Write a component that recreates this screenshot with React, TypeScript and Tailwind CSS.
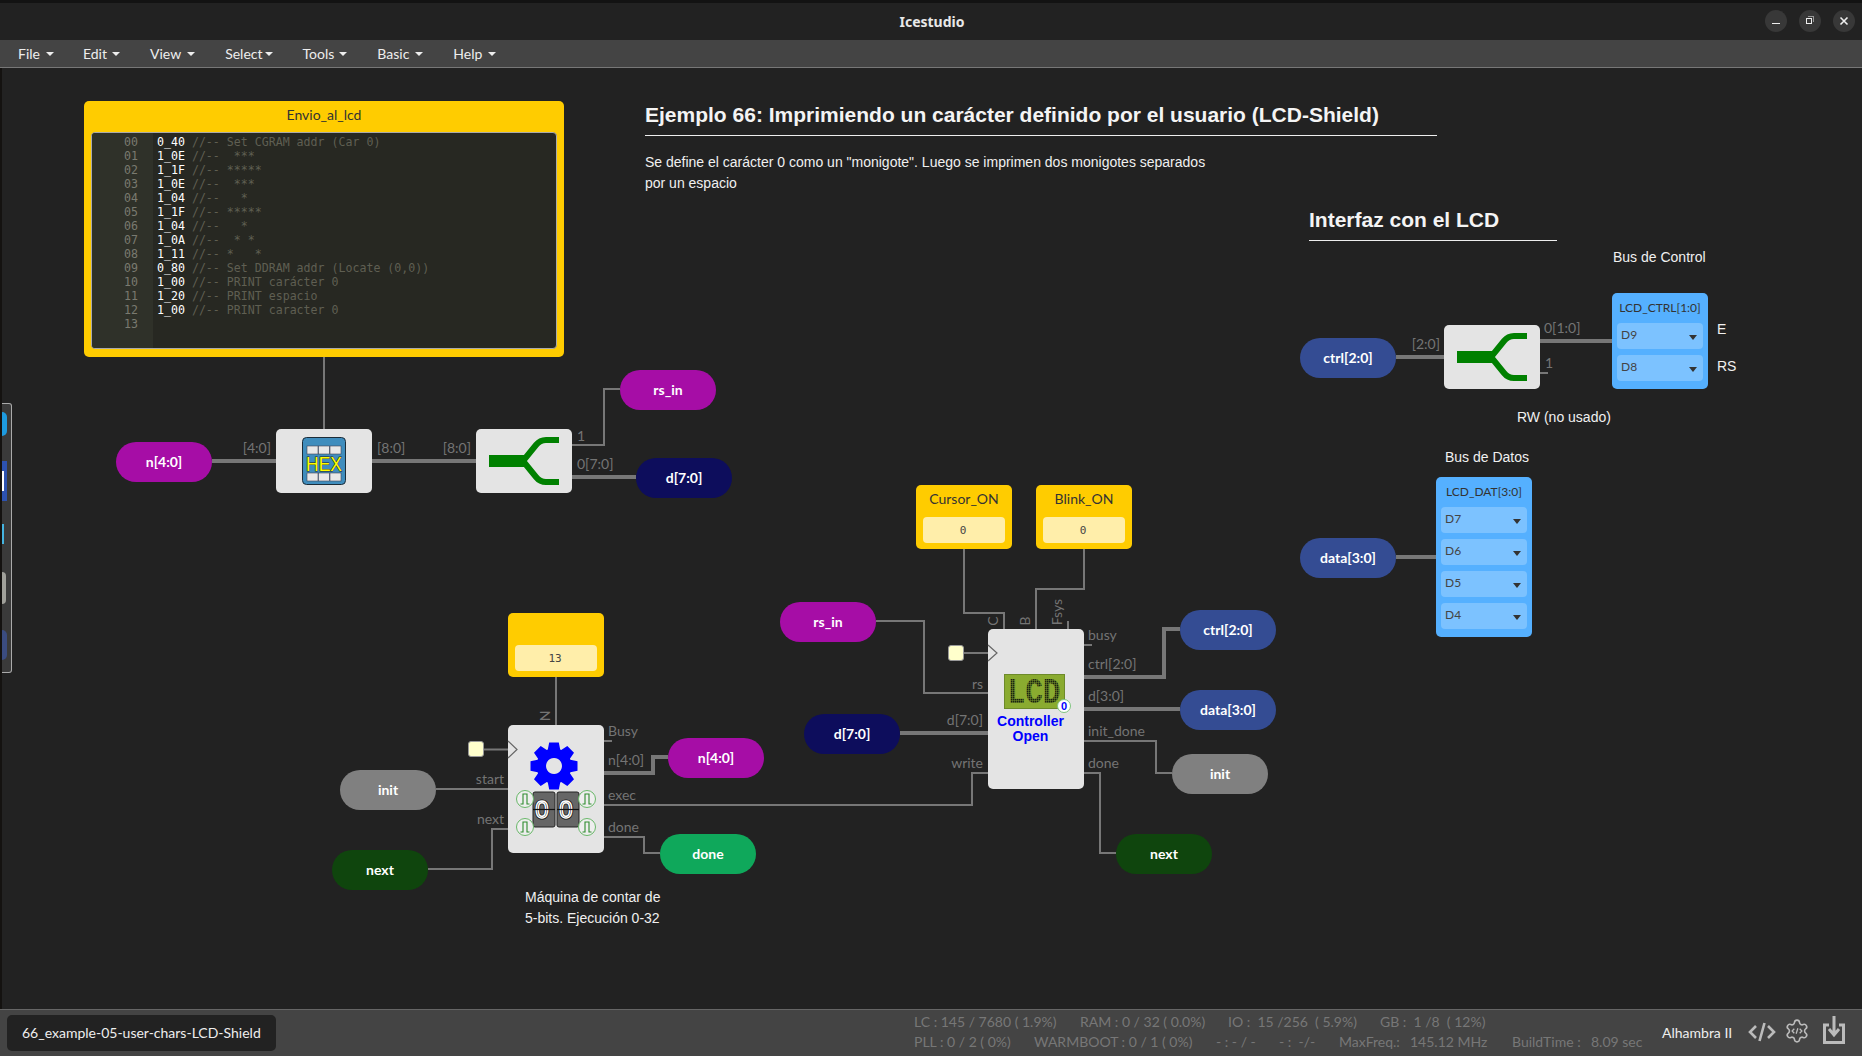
import React from 'react';

const menus = [
  { label: 'File', caret: 'ml-[6px]', gap: 'mr-[29px]' },
  { label: 'Edit', caret: 'ml-[5px]', gap: 'mr-[30px]' },
  { label: 'View', caret: 'ml-[6px]', gap: 'mr-[30px]' },
  { label: 'Select', caret: 'ml-[2px]', gap: 'mr-[30px]' },
  { label: 'Tools', caret: 'ml-[5px]', gap: 'mr-[30px]' },
  { label: 'Basic', caret: 'ml-[6px]', gap: 'mr-[30px]' },
  { label: 'Help', caret: 'ml-[6px]', gap: 'mr-[30px]' },
];

const codeLines = [
  ['0_40', '//-- Set CGRAM addr (Car 0)'],
  ['1_0E', '//--  ***'],
  ['1_1F', '//-- *****'],
  ['1_0E', '//--  ***'],
  ['1_04', '//--   *'],
  ['1_1F', '//-- *****'],
  ['1_04', '//--   *'],
  ['1_0A', '//--  * *'],
  ['1_11', '//-- *   *'],
  ['0_80', '//-- Set DDRAM addr (Locate (0,0))'],
  ['1_00', '//-- PRINT carácter 0'],
  ['1_20', '//-- PRINT espacio'],
  ['1_00', '//-- PRINT caracter 0'],
  ['', ''],
];

// wires in page coordinates
const thinWires = [
  'M324 357V429',
  'M620 389H604V445H572',
  'M556 677V725',
  'M484 749.5H508',
  'M436 789H508',
  'M428 869H492V829H508',
  'M604 741H612',
  'M604 805H972V773H988',
  'M604 837H644V853H660',
  'M964 549V613H1004V629',
  'M1084 549V589H1036V629',
  'M1068 621V629',
  'M876 621H924V693H988',
  'M964 653H988',
  'M1084 645H1092',
  'M1084 741H1156V773H1172',
  'M1084 773H1100V853H1116',
  'M1540 373H1548',
];

const thickWires = [
  'M212 461H276',
  'M372 461H476',
  'M572 477H636',
  'M604 773H653V757H668',
  'M900 733H988',
  'M1084 677H1164V629H1180',
  'M1084 709H1180',
  'M1396 357H1444',
  'M1540 341H1612',
  'M1396 557H1436',
];

function gearPath(cx: number, cy: number) {
  const teeth = 8;
  let d = '';
  for (let i = 0; i < teeth; i++) {
    const a = (i * 2 * Math.PI) / teeth - Math.PI / 2;
    const pts: [number, number][] = [
      [17.5, -0.36],
      [24, -0.2],
      [24, 0.2],
      [17.5, 0.36],
    ];
    pts.forEach(([r, da]) => {
      const x = cx + r * Math.cos(a + da);
      const y = cy + r * Math.sin(a + da);
      d += `${d ? 'L' : 'M'}${x.toFixed(1)} ${y.toFixed(1)}`;
    });
  }
  return `${d}Z`;
}

function Pill({ label, className }: { label: string; className: string }) {
  return (
    <div className={`absolute flex h-10 w-24 items-center justify-center rounded-[20px] pb-[2px] text-[14px] font-bold text-white ${className}`}>
      {label}
    </div>
  );
}

function Port({ children, className }: { children: React.ReactNode; className: string }) {
  return <div className={`absolute whitespace-nowrap text-[14px] leading-5 text-[#747474] ${className}`}>{children}</div>;
}

function Note({ children, className }: { children: React.ReactNode; className: string }) {
  return (
    <div className={`absolute whitespace-nowrap font-['Liberation_Sans',Arial,sans-serif] text-[14px] leading-5 text-[#f0f0f0] ${className}`}>
      {children}
    </div>
  );
}

function Constant({ name, value, className }: { name: string; value: string; className: string }) {
  return (
    <div className={`absolute flex h-16 w-24 flex-col items-center rounded-[5px] bg-[#ffcc00] ${className}`}>
      <div className="mb-1 flex h-7 items-center pb-[2px] text-[14px] text-[#333]">{name}</div>
      <div className="flex h-[26px] w-[82px] items-center justify-center rounded-[4px] bg-[#ffeeaa] pr-[2px] pt-[2px] font-['DejaVu_Sans_Mono',monospace] text-[11px] text-[#444]">
        {value}
      </div>
    </div>
  );
}

function PinSelect({ name }: { name: string }) {
  return (
    <div className="flex h-[26px] w-[86px] items-center justify-between rounded-[4px] bg-[#7cc2ff] pb-[2px] pl-[4px] pr-[6px] text-[12px] text-[#444]">
      <span>{name}</span>
      <span className="mt-[5px] h-0 w-0 border-x-4 border-t-[5px] border-x-transparent border-t-[#333]" />
    </div>
  );
}

function Clock({ className }: { className: string }) {
  return <div className={`absolute h-4 w-4 rounded-[3px] border border-[#999] bg-[#ffffcc] ${className}`} />;
}

function SplitIcon() {
  return (
    <svg width="96" height="64" viewBox="0 0 96 64" fill="none" stroke="#008000">
      <path d="M13 32H50" strokeWidth="12" />
      <path d="M47 32L60 16Q64 11 70 11H83" strokeWidth="6" />
      <path d="M47 32L60 48Q64 53 70 53H83" strokeWidth="6" />
    </svg>
  );
}

function Splitter({ className }: { className: string }) {
  return (
    <div className={`absolute h-16 w-24 rounded-[5px] bg-[#e4e4e4] ${className}`}>
      <SplitIcon />
    </div>
  );
}

function HexIcon() {
  const cols = [5, 16.5, 28];
  return (
    <svg width="44" height="48" viewBox="0 0 44 48">
      <rect x="0.5" y="0.5" width="43" height="47" rx="4" fill="#3f8dbd" stroke="#1c2c38" />
      {cols.map((x) => (
        <rect key={`t${x}`} x={x} y="9" width="11" height="8" fill="#e8e8e8" stroke="#445" strokeWidth="0.6" />
      ))}
      {cols.map((x) => (
        <rect key={`b${x}`} x={x} y="36" width="11" height="8" fill="#e8e8e8" stroke="#445" strokeWidth="0.6" />
      ))}
      <text
        x="22"
        y="34"
        textAnchor="middle"
        textLength="36"
        lengthAdjust="spacingAndGlyphs"
        fontFamily="Liberation Sans, sans-serif"
        fontSize="20"
        fill="#ffff00"
        stroke="#222"
        strokeWidth="1"
        paintOrder="stroke"
      >
        HEX
      </text>
    </svg>
  );
}

function Pulse({ x, y }: { x: number; y: number }) {
  return (
    <g transform={`translate(${x} ${y})`} fill="none">
      <circle r="8.5" fill="#eee" stroke="#69b869" />
      <path d="M-4.5 5H-2V-5H2V5H4.5" stroke="#2e8b2e" strokeWidth="1.1" />
    </g>
  );
}

function CounterIcon() {
  return (
    <svg className="absolute inset-0" width="96" height="128" viewBox="508 725 96 128">
      <path d={`${gearPath(554, 766)}M554 758a8 8 0 1 0 0.01 0Z`} fill="#0000ff" fillRule="evenodd" />
      {[533, 557].map((x) => (
        <g key={x} fontFamily="Liberation Sans, sans-serif" fontSize="24" textAnchor="middle" fill="none">
          <rect x={x} y="792" width="22" height="35" rx="2" fill="#666" stroke="#222" />
          <text x={x + 9} y="818" stroke="#111" strokeWidth="3">
            0
          </text>
          <text x={x + 9} y="818" stroke="#fff" strokeWidth="1.4">
            0
          </text>
          <path d={`M${x} 809.5H${x + 22}`} stroke="#111" strokeWidth="1.2" />
        </g>
      ))}
      <Pulse x={525} y={799} />
      <Pulse x={587} y={799} />
      <Pulse x={525} y={827} />
      <Pulse x={587} y={827} />
    </svg>
  );
}

function LcdIcon() {
  return (
    <svg className="absolute left-4 top-[45px]" width="67" height="42" viewBox="0 0 67 42">
      <defs>
        <pattern id="dots" width="2" height="2" patternUnits="userSpaceOnUse">
          <path d="M0 0H2M0 0V2" stroke="#8aab30" strokeWidth="0.8" />
        </pattern>
      </defs>
      <rect x="0.5" y="0.5" width="60" height="34" fill="#8aab30" stroke="#6d8a2a" />
      <text
        x="30"
        y="29"
        textAnchor="middle"
        textLength="53"
        lengthAdjust="spacingAndGlyphs"
        fontFamily="Liberation Mono, monospace"
        fontWeight="bold"
        fontSize="37"
        fill="#1a2410"
      >
        LCD
      </text>
      <rect x="1" y="1" width="59" height="33" fill="url(#dots)" />
      <circle cx="60" cy="32" r="6.5" fill="#fff" stroke="#7fc47f" />
      <text
        x="60"
        y="36"
        textAnchor="middle"
        fontFamily="Liberation Sans, sans-serif"
        fontWeight="bold"
        fontSize="11"
        fill="#0000ff"
      >
        0
      </text>
    </svg>
  );
}

function SideDock() {
  return (
    <div className="absolute left-[2px] top-[335px] h-[270px] w-[10px] rounded-r-[3px] border-y border-r border-[#aaa] bg-[#3a3a3a]">
      <div className="absolute left-0 top-[8px] h-[24px] w-[5px] rounded-r-md bg-[#1e9be0]" />
      <div className="absolute left-0 top-[57px] h-[40px] w-[5px] bg-[#2d52b0]">
        <div className="h-[20px] w-[2px] translate-y-[10px] bg-white" />
      </div>
      <div className="absolute left-0 top-[120px] h-[20px] w-[2px] bg-[#45b4e0]" />
      <div className="absolute left-0 top-[168px] h-[32px] w-[4px] rounded-r-sm bg-[#a0a09a]" />
      <div className="absolute left-0 top-[226px] h-[30px] w-[5px] rounded-r-full bg-[#3b4c80]" />
    </div>
  );
}

export default function App() {
  return (
    <div className="flex h-screen w-full flex-col overflow-hidden bg-[#222] font-[Lato,sans-serif]">
      {/* title bar */}
      <div className="relative flex h-10 shrink-0 items-center justify-center border-t-[3px] border-[#131313] bg-[#222]">
        <span className="pl-[2px] font-['Noto_Sans',sans-serif] text-[14px] font-bold text-[#e8e8e8]">Icestudio</span>
        <div className="absolute right-[7px] top-[7px] flex gap-[12px]">
          <button className="flex h-[22px] w-[22px] items-center justify-center rounded-full bg-[#383838]">
            <span className="mt-[5px] h-[1px] w-[8px] bg-[#eee]" />
          </button>
          <button className="relative flex h-[22px] w-[22px] items-center justify-center rounded-full bg-[#383838]">
            <span className="absolute left-[9px] top-[6px] h-[6px] w-[6px] border-r border-t border-[#999]" />
            <span className="absolute left-[7px] top-[8px] h-[6px] w-[6px] border border-[#eee]" />
          </button>
          <button className="flex h-[22px] w-[22px] items-center justify-center rounded-full bg-[#383838]">
            <svg width="10" height="10" viewBox="0 0 10 10" stroke="#eee" strokeWidth="1.6">
              <path d="M1.5 1.5L8.5 8.5M8.5 1.5L1.5 8.5" />
            </svg>
          </button>
        </div>
      </div>

      {/* menu bar */}
      <div className="flex h-7 shrink-0 items-center border-b border-[#777] bg-[#444] pl-[18px] text-[14px] text-[#eee]">
        {menus.map((m) => (
          <div key={m.label} className={`flex items-center ${m.gap}`}>
            <span>{m.label}</span>
            <span className={`h-0 w-0 border-x-4 border-t-4 border-x-transparent border-t-[#eee] ${m.caret}`} />
          </div>
        ))}
      </div>

      {/* canvas */}
      <div className="relative flex-1 border-l-2 border-[#141210]">
        <div className="absolute -left-[2px] top-0 h-[941px] w-[1862px]">
          <svg className="absolute inset-0" width="1862" height="941" viewBox="0 68 1862 941" fill="none" stroke="#777">
            {thinWires.map((d) => (
              <path key={d} d={d} strokeWidth="2" />
            ))}
            {thickWires.map((d) => (
              <path key={d} d={d} strokeWidth="4" />
            ))}
          </svg>

          {/* memory block */}
          <div className="absolute left-[84px] top-[33px] flex h-[256px] w-[480px] flex-col rounded-[5px] bg-[#ffcc00] pb-2 pl-[7px] pr-[7px]">
            <div className="flex h-[31px] items-center justify-center pb-[5px] text-[14px] text-[#333]">Envio_al_lcd</div>
            <div className="flex flex-1 overflow-hidden rounded-[4px] border border-[#aaa] bg-[#272822] font-['DejaVu_Sans_Mono',monospace] text-[11.6px] leading-[14px]">
              <div className="w-[61px] shrink-0 bg-[#2f3129] pr-[15px] pt-[2px] text-right text-[#7a7a70]">
                {codeLines.map((_, i) => (
                  <div key={i}>{String(i).padStart(2, '0')}</div>
                ))}
              </div>
              <div className="pl-[4px] pt-[2px]">
                {codeLines.map(([code, comment], i) => (
                  <div key={i} className="h-[14px] whitespace-pre text-[#ffffff]">
                    {code} <span className="text-[#5f5f52]">{comment}</span>
                  </div>
                ))}
              </div>
            </div>
          </div>

          <Pill label="n[4:0]" className="left-[116px] top-[374px] bg-[#a60da6]" />
          <Pill label="rs_in" className="left-[620px] top-[302px] bg-[#a60da6]" />
          <Pill label="d[7:0]" className="left-[636px] top-[390px] bg-[#0d0d5c]" />
          <div className="absolute left-[276px] top-[361px] flex h-16 w-24 items-center justify-center rounded-[5px] bg-[#e4e4e4]">
            <HexIcon />
          </div>
          <Splitter className="left-[476px] top-[361px]" />
          <Port className="right-[1591px] top-[370px]">[4:0]</Port>
          <Port className="left-[377px] top-[370px]">[8:0]</Port>
          <Port className="right-[1391px] top-[370px]">[8:0]</Port>
          <Port className="left-[577px] top-[358px]">1</Port>
          <Port className="left-[577px] top-[386px]">0[7:0]</Port>

          {/* counter */}
          <Constant name="" value="13" className="left-[508px] top-[545px]" />
          <Clock className="left-[468px] top-[673px]" />
          <div className="absolute left-[508px] top-[657px] h-32 w-24 rounded-[5px] bg-[#e4e4e4]">
            <CounterIcon />
          </div>
          <Pill label="init" className="left-[340px] top-[702px] bg-[#808080]" />
          <Pill label="next" className="left-[332px] top-[782px] bg-[#0f450d]" />
          <Pill label="n[4:0]" className="left-[668px] top-[670px] bg-[#a60da6]" />
          <Pill label="done" className="left-[660px] top-[766px] bg-[#0fa85b]" />
          <Port className="left-[535px] top-[638px] w-5 -rotate-90 text-center">N</Port>
          <Port className="left-[608px] top-[653px]">Busy</Port>
          <Port className="left-[608px] top-[682px]">n[4:0]</Port>
          <Port className="left-[608px] top-[717px]">exec</Port>
          <Port className="left-[608px] top-[749px]">done</Port>
          <Port className="right-[1358px] top-[701px]">start</Port>
          <Port className="right-[1358px] top-[741px]">next</Port>
          <Note className="left-[525px] top-[819px] leading-[21px]">
            Máquina de contar de
            <br />
            5-bits. Ejecución 0-32
          </Note>

          {/* lcd controller */}
          <Constant name="Cursor_ON" value="0" className="left-[916px] top-[417px]" />
          <Constant name="Blink_ON" value="0" className="left-[1036px] top-[417px]" />
          <Clock className="left-[948px] top-[577px]" />
          <div className="absolute left-[988px] top-[561px] h-40 w-24 rounded-[5px] bg-[#e4e4e4]">
            <LcdIcon />
            <div className="absolute left-0 top-[85px] w-[85px] text-center font-['Liberation_Sans',Arial,sans-serif] text-[14px] font-bold leading-[15px] text-[#0000ff]">
              Controller
              <br />
              Open
            </div>
          </div>
          <Pill label="rs_in" className="left-[780px] top-[534px] bg-[#a60da6]" />
          <Pill label="d[7:0]" className="left-[804px] top-[646px] bg-[#0d0d5c]" />
          <Pill label="ctrl[2:0]" className="left-[1180px] top-[542px] bg-[#344c93]" />
          <Pill label="data[3:0]" className="left-[1180px] top-[622px] bg-[#344c93]" />
          <Pill label="init" className="left-[1172px] top-[686px] bg-[#808080]" />
          <Pill label="next" className="left-[1116px] top-[766px] bg-[#0f450d]" />
          <Port className="left-[983px] top-[543px] w-5 -rotate-90 text-center">C</Port>
          <Port className="left-[1015px] top-[543px] w-5 -rotate-90 text-center">B</Port>
          <Port className="left-[1037px] top-[534px] w-10 -rotate-90 text-center">Fsys</Port>
          <Port className="left-[1088px] top-[557px]">busy</Port>
          <Port className="left-[1088px] top-[586px]">ctrl[2:0]</Port>
          <Port className="left-[1088px] top-[618px]">d[3:0]</Port>
          <Port className="left-[1088px] top-[653px]">init_done</Port>
          <Port className="left-[1088px] top-[685px]">done</Port>
          <Port className="right-[879px] top-[606px]">rs</Port>
          <Port className="right-[879px] top-[642px]">d[7:0]</Port>
          <Port className="right-[879px] top-[685px]">write</Port>

          {/* clock pins */}
          <svg className="absolute inset-0" width="1862" height="941" viewBox="0 68 1862 941" fill="none" stroke="#666" strokeWidth="1.2">
            <path d="M508 741L517 749.5L508 758" />
            <path d="M988 645L997 653L988 661" />
          </svg>

          {/* interface */}
          <Pill label="ctrl[2:0]" className="left-[1300px] top-[270px] bg-[#344c93]" />
          <Pill label="data[3:0]" className="left-[1300px] top-[470px] bg-[#344c93]" />
          <Splitter className="left-[1444px] top-[257px]" />
          <Port className="right-[422px] top-[266px]">[2:0]</Port>
          <Port className="left-[1544px] top-[250px]">0[1:0]</Port>
          <Port className="left-[1545px] top-[285px]">1</Port>

          <div className="absolute left-[1612px] top-[225px] flex h-24 w-24 flex-col items-center gap-[6px] rounded-[5px] bg-[#55b0ff]">
            <div className="flex h-6 items-center pt-[6px] text-[12px] text-[#333]">LCD_CTRL[1:0]</div>
            <PinSelect name="D9" />
            <PinSelect name="D8" />
          </div>
          <div className="absolute left-[1436px] top-[409px] flex h-40 w-24 flex-col items-center gap-[6px] rounded-[5px] bg-[#55b0ff]">
            <div className="flex h-6 items-center pt-[6px] text-[12px] text-[#333]">LCD_DAT[3:0]</div>
            <PinSelect name="D7" />
            <PinSelect name="D6" />
            <PinSelect name="D5" />
            <PinSelect name="D4" />
          </div>

          {/* notes */}
          <div className="absolute left-[645px] top-[35px] w-[792px] border-b border-[#eee] pb-2 font-['Liberation_Sans',Arial,sans-serif] text-[21px] font-bold leading-6 text-[#f4f4f4]">
            Ejemplo 66: Imprimiendo un carácter definido por el usuario (LCD-Shield)
          </div>
          <Note className="left-[645px] top-[84px] leading-[21px]">
            Se define el carácter 0 como un "monigote". Luego se imprimen dos monigotes separados
            <br />
            por un espacio
          </Note>
          <div className="absolute left-[1309px] top-[140px] w-[248px] border-b border-[#eee] pb-2 font-['Liberation_Sans',Arial,sans-serif] text-[21px] font-bold leading-6 text-[#f4f4f4]">
            Interfaz con el LCD
          </div>
          <Note className="left-[1613px] top-[179px]">Bus de Control</Note>
          <Note className="left-[1717px] top-[251px]">E</Note>
          <Note className="left-[1717px] top-[288px]">RS</Note>
          <Note className="left-[1517px] top-[339px]">RW (no usado)</Note>
          <Note className="left-[1445px] top-[379px]">Bus de Datos</Note>

          <SideDock />
        </div>
      </div>

      {/* footer */}
      <div className="flex h-[47px] shrink-0 items-center border-t border-[#666] bg-[#444]">
        <div className="ml-[7px] flex h-9 w-[269px] items-center rounded-[5px] bg-[#222] pb-[2px] pl-[15px] text-[14px] text-[#eee]">
          66_example-05-user-chars-LCD-Shield
        </div>
        <div className="mb-[3px] ml-[638px] flex w-[748px] flex-col gap-[2px] text-[14px] leading-[18px] text-[#777]">
          <div className="flex whitespace-pre">
            <span className="w-[166px]">LC : 145 / 7680 ( 1.9%)</span>
            <span className="w-[148px]">RAM : 0 / 32 ( 0.0%)</span>
            <span className="w-[152px]">IO :  15 /256  ( 5.9%)</span>
            <span>GB :  1 /8  ( 12%)</span>
          </div>
          <div className="flex whitespace-pre">
            <span className="w-[120px]">PLL : 0 / 2 ( 0%)</span>
            <span className="w-[182px]">WARMBOOT : 0 / 1 ( 0%)</span>
            <span className="w-[63px]">- : - / -</span>
            <span className="w-[60px]">- :  -/-</span>
            <span className="w-[71px]">MaxFreq.:</span>
            <span className="w-[102px]">145.12 MHz</span>
            <span className="w-[79px]">BuildTime :</span>
            <span>8.09 sec</span>
          </div>
        </div>
        <span className="mb-[2px] text-[14px] text-[#eee]">Alhambra II</span>
        <svg className="mb-[3px] ml-[16px]" width="28" height="20" viewBox="0 0 28 20" fill="none" stroke="#bbb" strokeWidth="2.6">
          <path d="M8 4L2 10L8 16M20 4L26 10L20 16M16.5 1L11.5 19" />
        </svg>
        <svg className="mb-[5px] ml-[8px]" width="26" height="26" viewBox="0 0 24 24" fill="none" stroke="#bbb" strokeWidth="1.5">
          <path d="M9.671 4.136a2.34 2.34 0 0 1 4.659 0 2.34 2.34 0 0 0 3.319 1.915 2.34 2.34 0 0 1 2.33 4.033 2.34 2.34 0 0 0 0 3.831 2.34 2.34 0 0 1-2.33 4.033 2.34 2.34 0 0 0-3.319 1.915 2.34 2.34 0 0 1-4.659 0 2.34 2.34 0 0 0-3.32-1.915 2.34 2.34 0 0 1-2.33-4.033 2.34 2.34 0 0 0 0-3.831A2.34 2.34 0 0 1 6.35 6.051a2.34 2.34 0 0 0 3.319-1.915" />
          <path d="M9.5 10L7.5 12L9.5 14M14.5 10L16.5 12L14.5 14M12.8 9.5L11.2 14.5" strokeWidth="1.2" />
        </svg>
        <svg className="mb-[6px] ml-[13px]" width="22" height="28" viewBox="0 0 22 28" fill="none" stroke="#bbb" strokeWidth="3">
          <path d="M6 9H1.5V26.5H20.5V9H16" />
          <path d="M11 0V17M6 13L11 19L16 13" />
        </svg>
      </div>
    </div>
  );
}
